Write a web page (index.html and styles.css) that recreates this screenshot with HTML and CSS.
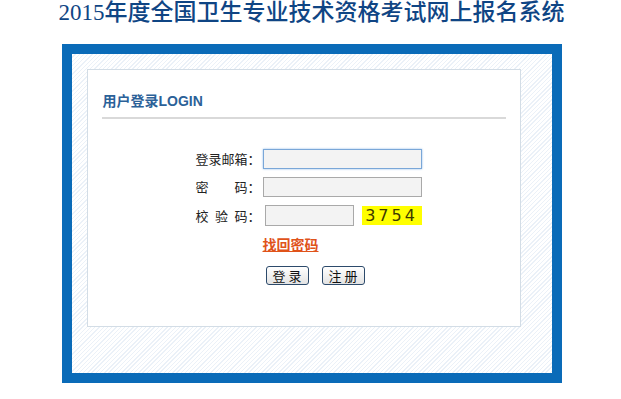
FILE: index.html
```html
<!DOCTYPE html>
<html lang="zh-CN">
<head>
  <meta charset="UTF-8">
  <title>2015年度全国卫生专业技术资格考试网上报名系统</title>
  <link rel="stylesheet" href="styles.css">
</head>
<body>
  <h1 class="site-title">2015年度全国卫生专业技术资格考试网上报名系统</h1>
  <div class="frame">
    <div class="panel">
      <h2 class="panel-title">用户登录LOGIN</h2>
      <form class="login">
        <label class="label" for="email">登录邮箱：</label>
        <input id="email" class="field field-focus" type="text">
        <label class="label" for="pwd">密　　码：</label>
        <input id="pwd" class="field" type="password">
        <label class="label" for="code">校&ensp;验&ensp;码：</label>
        <div class="code-row">
          <input id="code" class="field field-code" type="text">
          <span class="captcha">3754</span>
        </div>
        <span></span>
        <a class="forgot" href="#">找回密码</a>
        <span></span>
        <div class="actions">
          <button type="button" class="btn">登录</button>
          <button type="button" class="btn">注册</button>
        </div>
      </form>
    </div>
  </div>
</body>
</html>
```

FILE: styles.css
```css
* { box-sizing: border-box; }
body {
  margin: 0;
  background: #ffffff;
  font-family: "Noto Sans CJK SC", sans-serif;
  color: #222;
}
.site-title {
  margin: 0;
  padding-left: 2px;
  font-family: "Liberation Serif", "Noto Sans CJK SC", serif;
  font-size: 23px;
  line-height: 26px;
  font-weight: 500;
  color: #0f4584;
  text-align: center;
}
.frame {
  width: 500px;
  margin: 18px auto 0;
  position: relative;
  left: 1px;
  padding: 15px 31px 46px 15px;
  border: 10px solid #0a6bb8;
  background: repeating-linear-gradient(135deg, #ffffff 0, #ffffff 2px, #ebf1f8 2px, #ebf1f8 3px);
}
.panel {
  height: 258px;
  background: #ffffff;
  border: 1px solid #d3dde6;
  padding: 0 14px;
}
.panel-title {
  margin: 0;
  padding: 22px 0 7px 1px;
  font-size: 14px;
  line-height: 18px;
  font-weight: bold;
  color: #2b6198;
  font-family: "Liberation Sans", "Noto Sans CJK SC", sans-serif;
  border-bottom: 2px solid #d9d9d9;
}
.login {
  display: grid;
  grid-template-columns: 67px 160px;
  row-gap: 8px;
  align-items: center;
  margin-top: 30px;
  padding-left: 94px;
}
.label {
  font-size: 13px;
  line-height: 20px;
  color: #222;
  white-space: pre;
}
.field {
  width: 159px;
  height: 20px;
  border: 1px solid #a9a9a9;
  background: #f3f3f3;
  margin: 0;
}
.field-focus {
  border-color: #7aa7d8;
  box-shadow: 0 0 2px #8fbbe8;
}
.code-row {
  display: flex;
  align-items: center;
  gap: 8px;
}
.field-code {
  width: 89px;
  height: 21px;
  margin-left: 2px;
}
.captcha {
  width: 60px;
  height: 19px;
  background: #ffff00;
  color: #3d3a00;
  font-family: "DejaVu Sans", sans-serif;
  font-size: 16px;
  line-height: 19px;
  letter-spacing: 3px;
  text-align: center;
}
.forgot {
  margin-top: 1px;
  font-size: 14px;
  line-height: 18px;
  font-weight: bold;
  color: #e0531a;
  text-decoration: underline;
}
.actions {
  display: flex;
  gap: 13px;
  margin: 5px 0 0 3px;
}
.btn {
  width: 43px;
  height: 19px;
  padding: 0 0 0 3px;
  border: 1px solid #2c4a6b;
  border-radius: 3px;
  background: linear-gradient(#ffffff, #e3e3e3);
  font-family: "Noto Sans CJK SC", sans-serif;
  font-size: 13px;
  line-height: 16px;
  letter-spacing: 3px;
  color: #111;
}
```
